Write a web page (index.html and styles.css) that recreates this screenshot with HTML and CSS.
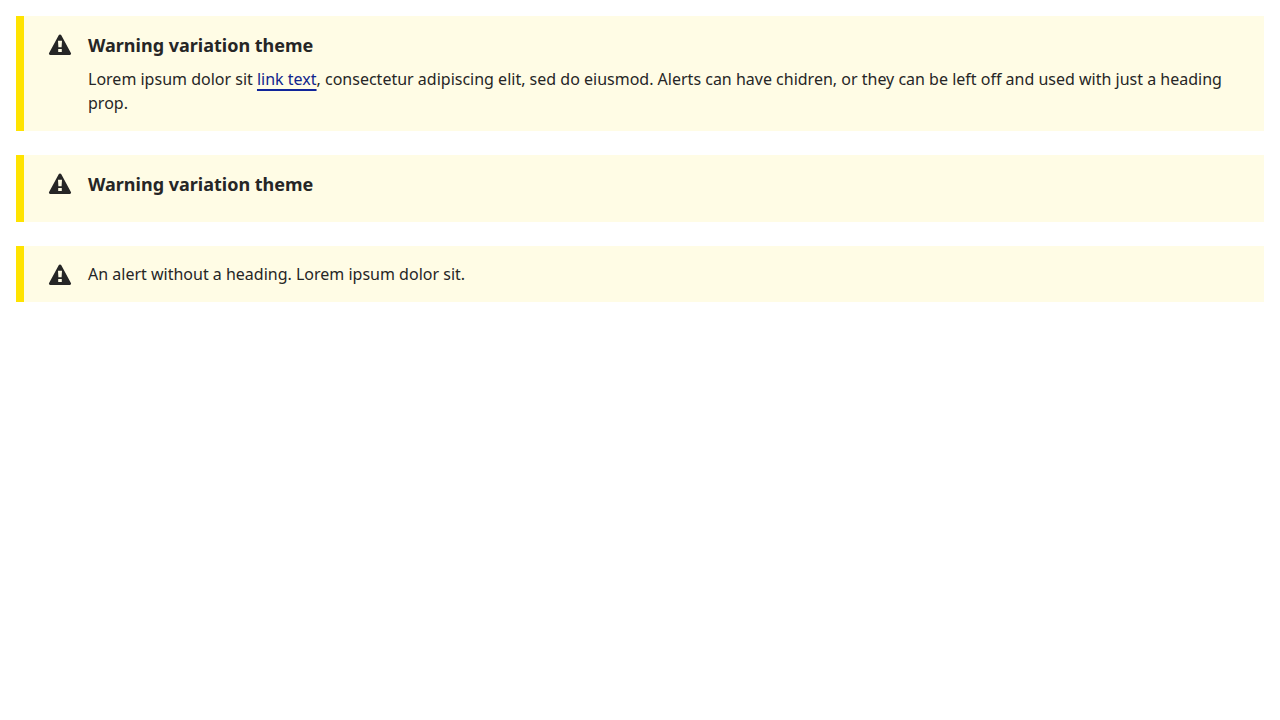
FILE: index.html
```html
<!DOCTYPE html>
<html lang="en">
<head>
<meta charset="utf-8">
<title>Alerts</title>
<link rel="stylesheet" href="styles.css">
</head>
<body>
<svg class="sprite" aria-hidden="true">
  <symbol id="warning" viewBox="0 0 24 24">
    <path fill-rule="evenodd" d="M10.7 3.2a1.5 1.5 0 0 1 2.6 0l9.6 17.7a1.4 1.4 0 0 1-1.3 2.1h-19.2a1.4 1.4 0 0 1-1.3-2.1zM10 8.8l.4 6.4h3.2l.4-6.4zM10.2 17v3h3.6v-3z"/>
  </symbol>
</svg>
<main class="alerts">
  <section class="alert">
    <svg class="alert-icon" aria-hidden="true"><use href="#warning"/></svg>
    <div class="alert-body">
      <h2 class="alert-heading">Warning variation theme</h2>
      <p class="alert-text">Lorem ipsum dolor sit <a class="alert-link" href="#">link text</a>, consectetur adipiscing elit, sed do eiusmod. Alerts can have chidren, or they can be left off and used with just a heading prop.</p>
    </div>
  </section>
  <section class="alert">
    <svg class="alert-icon" aria-hidden="true"><use href="#warning"/></svg>
    <div class="alert-body">
      <h2 class="alert-heading">Warning variation theme</h2>
    </div>
  </section>
  <section class="alert">
    <svg class="alert-icon" aria-hidden="true"><use href="#warning"/></svg>
    <div class="alert-body">
      <p class="alert-text">An alert without a heading. Lorem ipsum dolor sit.</p>
    </div>
  </section>
</main>
</body>
</html>
```

FILE: styles.css
```css
body {
  margin: 0;
  background: #fff;
  color: #262626;
  font: 16px/24px "Noto Sans", "Open Sans", sans-serif;
}

.sprite {
  display: none;
}

.alerts {
  display: flex;
  flex-direction: column;
  gap: 24px;
  padding: 16px;
}

.alert {
  display: flex;
  gap: 16px;
  padding: 16px 24px;
  border-left: 8px solid #ffe300;
  background: #fffce5;
}

.alert-icon {
  flex: none;
  width: 24px;
  height: 24px;
  fill: #262626;
}

.alert-heading {
  margin: 0 0 8px;
  font-size: 18px;
  line-height: 27px;
}

.alert-text {
  margin: 0;
}

.alert-link {
  color: #10258c;
  text-decoration: underline 2px #10259a;
  text-decoration-skip-ink: none;
  text-underline-offset: 4px;
}
```
